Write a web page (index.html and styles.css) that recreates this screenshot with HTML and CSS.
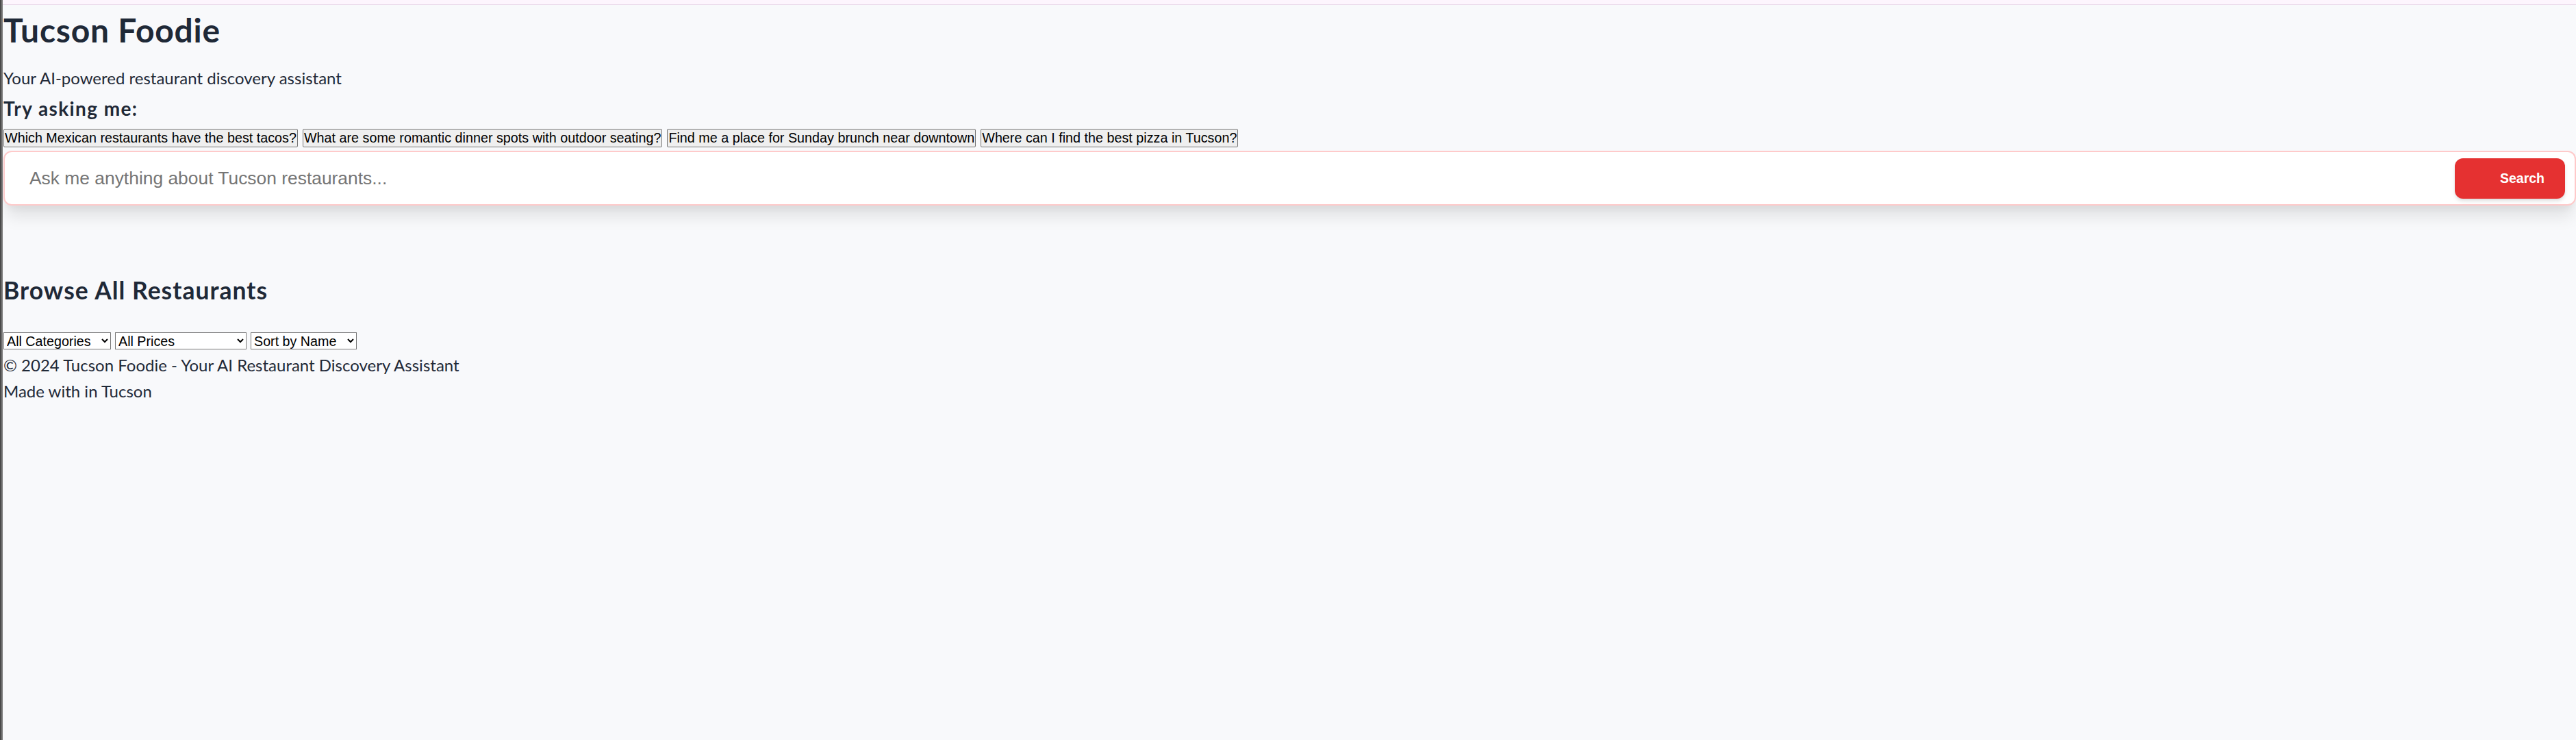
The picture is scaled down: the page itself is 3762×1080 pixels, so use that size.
FILE: index.html
```html
<!DOCTYPE html>
<html lang="en">
<head>
<meta charset="utf-8">
<title>Tucson Foodie</title>
<link rel="stylesheet" href="styles.css">
</head>
<body>
<div class="frame">
  <div class="edge"></div>
  <div class="page">
    <header class="topbar"></header>
    <main class="content">
      <h1 class="title">Tucson Foodie</h1>
      <p class="subtitle">Your AI-powered restaurant discovery assistant</p>
      <h3 class="try">Try asking me:</h3>
      <div class="suggestions">
        <button class="chip" type="button">Which Mexican restaurants have the best tacos?</button>
        <button class="chip" type="button">What are some romantic dinner spots with outdoor seating?</button>
        <button class="chip" type="button">Find me a place for Sunday brunch near downtown</button>
        <button class="chip" type="button">Where can I find the best pizza in Tucson?</button>
      </div>
      <form class="search">
        <input class="search-input" type="text" placeholder="Ask me anything about Tucson restaurants...">
        <button class="search-btn" type="button">Search</button>
      </form>
      <h2 class="browse">Browse All Restaurants</h2>
      <div class="filters">
        <select class="sel sel-cat"><option>All Categories</option></select>
        <select class="sel sel-price"><option>All Prices</option></select>
        <select class="sel sel-sort"><option>Sort by Name</option></select>
      </div>
      <footer class="footer">
        <p class="foot-line">© 2024 Tucson Foodie - Your AI Restaurant Discovery Assistant</p>
        <p class="foot-line">Made with in Tucson</p>
      </footer>
    </main>
  </div>
</div>
</body>
</html>
```

FILE: styles.css
```css
* { box-sizing: border-box; }
html, body { margin: 0; padding: 0; }
body {
  background: #f8f9fb;
  color: #1f2937;
  font-family: "Lato", "Noto Sans", sans-serif;
}
.frame { display: flex; min-height: 100vh; }
.edge {
  width: 4px;
  flex: none;
  background: linear-gradient(to right, #4a4a4a 0, #4a4a4a 2px, #7a7a7a 2px, #7a7a7a 4px);
}
.page { flex: 1; min-width: 0; }
.topbar {
  height: 7px;
  background: #fdf5fd;
  border-bottom: 1px solid #ecdcec;
}
.content { padding-left: 1px; }

.title {
  margin: 9px 0 0;
  font-size: 48px;
  line-height: 56px;
  font-weight: 700;
  letter-spacing: 0.75px;
}
.subtitle {
  margin: 27px 0 0;
  font-size: 24px;
  line-height: 30px;
}
.try {
  margin: 12px 0 0;
  font-size: 28px;
  line-height: 34px;
  font-weight: 700;
  letter-spacing: 1.4px;
}
.suggestions {
  display: flex;
  gap: 7px;
  margin-top: 13px;
}
.chip {
  font-family: "Liberation Sans", Arial, sans-serif;
  font-size: 19.75px;
  line-height: 23px;
  padding: 1px 1px;
  color: #000;
  background: #efefef;
  border: 1px solid #767676;
  border-radius: 2px;
  white-space: nowrap;
}
.search {
  display: flex;
  align-items: stretch;
  margin-top: 5px;
  height: 80px;
  padding: 9px 14px 8px 0;
  background: #fff;
  border: 2px solid #fecaca;
  border-radius: 12px;
  box-shadow: 0 20px 25px -5px rgba(0,0,0,0.10), 0 10px 10px -5px rgba(0,0,0,0.04);
}
.search-input {
  flex: 1;
  min-width: 0;
  border: 0;
  outline: none;
  background: transparent;
  padding: 0 0 0 36px;
  font-family: "Liberation Sans", Arial, sans-serif;
  font-size: 26.4px;
  color: #1f2937;
}
.search-input::placeholder { color: #757575; }
.search-btn {
  width: 161px;
  flex: none;
  padding: 0 30px 0 0;
  text-align: right;
  border: 0;
  border-radius: 12px;
  background: #e53131;
  color: #fff;
  font-family: "Liberation Sans", Arial, sans-serif;
  font-weight: 700;
  font-size: 19.5px;
  box-shadow: 0 4px 6px -1px rgba(0,0,0,0.12), 0 2px 4px -1px rgba(0,0,0,0.06);
}
.browse {
  margin: 103px 0 0;
  font-size: 35.5px;
  line-height: 42px;
  font-weight: 700;
  letter-spacing: 1px;
}
.filters {
  display: flex;
  gap: 6px;
  margin-top: 40px;
}
.sel {
  height: 25px;
  font-family: "Liberation Sans", Arial, sans-serif;
  font-size: 19.7px;
  color: #000;
  background: #fff;
  border: 1px solid #767676;
  border-radius: 0;
}
.sel-cat { width: 157px; }
.sel-price { width: 192px; }
.sel-sort { width: 155px; }
.footer { margin-top: 4px; }
.foot-line {
  margin: 0;
  font-size: 24px;
  line-height: 38px;
}
```
